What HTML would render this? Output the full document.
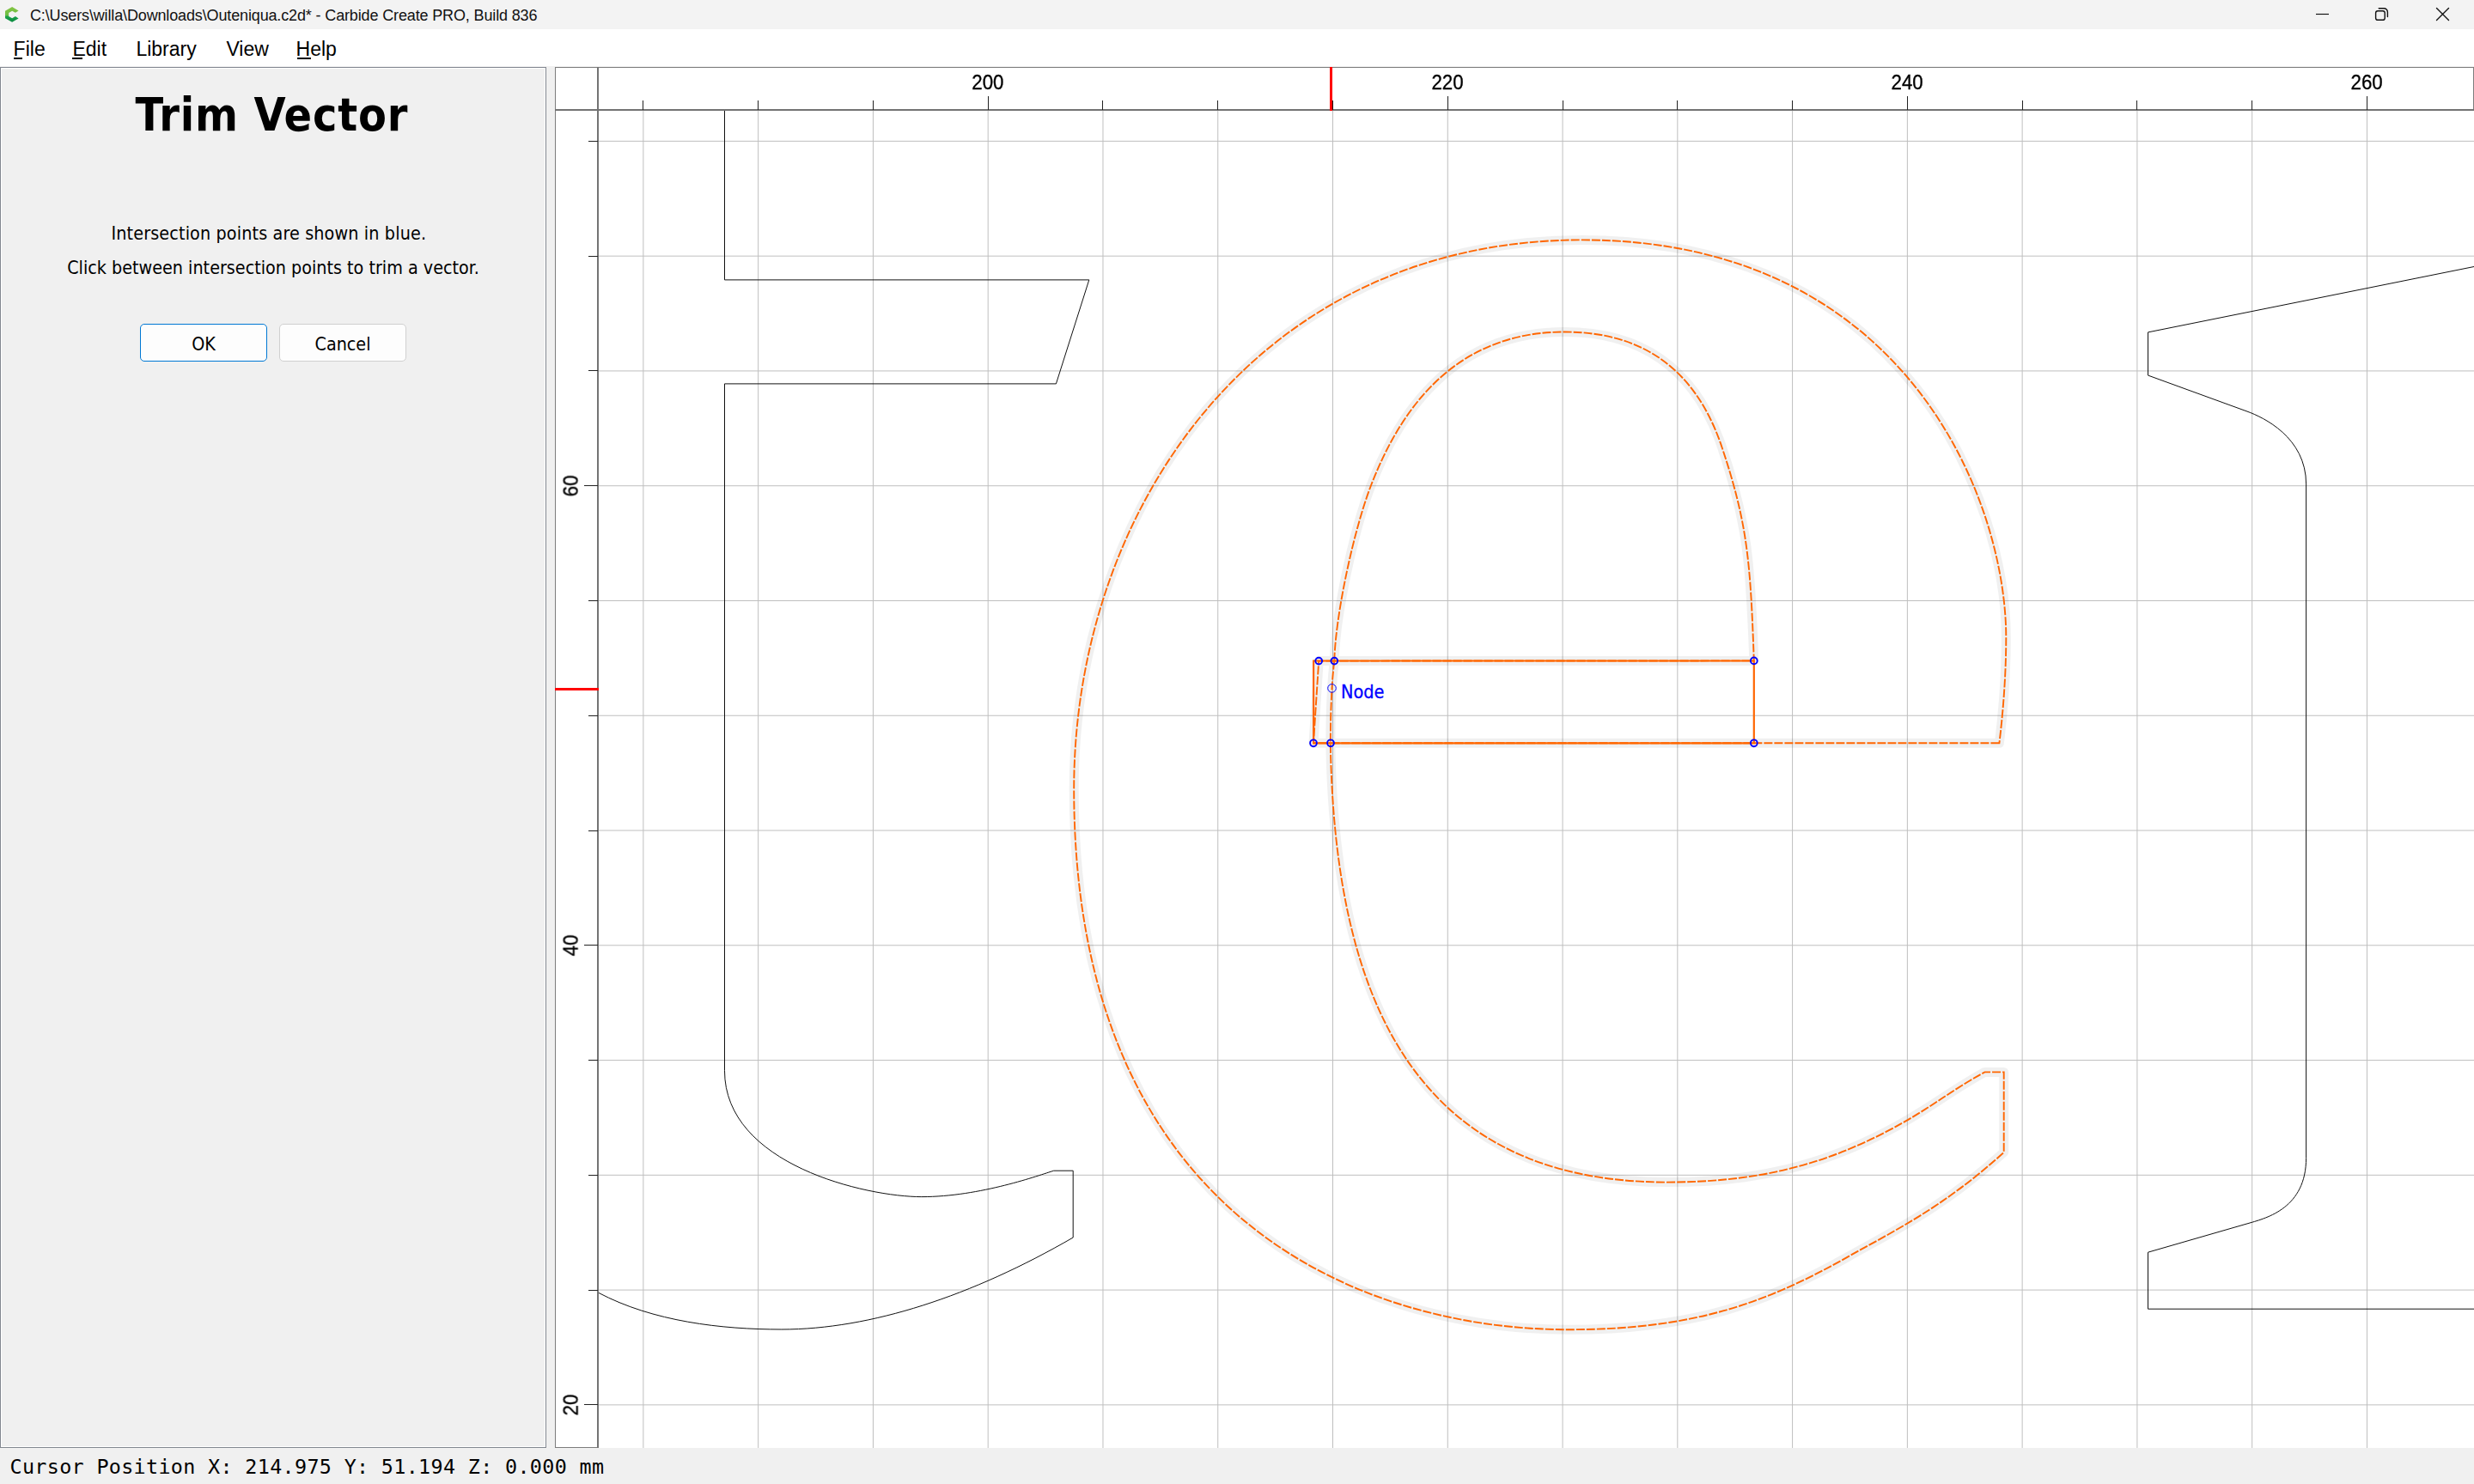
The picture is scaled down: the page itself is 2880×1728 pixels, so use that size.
<!DOCTYPE html>
<html lang="en"><head><meta charset="utf-8"><title>Carbide Create PRO - Trim Vector</title>
<style>
html,body{margin:0;padding:0}
body{width:2880px;height:1728px;overflow:hidden;background:#f0f0f0;position:relative;font-family:"Liberation Sans",sans-serif;color:#000}
.abs{position:absolute;white-space:nowrap}
#titlebar{left:0;top:0;width:2880px;height:34px;background:#f3f3f3}
#title{left:35px;top:8px;font-size:18px;line-height:21px;letter-spacing:-0.14px;color:#111}
#menubar{left:0;top:34px;width:2880px;height:43px;background:#fff}
.mi{top:43px;font-size:23px;line-height:28px}
.mi u{text-decoration:none}
.ul{top:67px;height:2px;background:#000}
#panel{left:0;top:78px;width:634px;height:1606px;background:#f0f0f0;border:1px solid #828790;box-shadow:inset 0 0 0 1px #fff}
.tah{font-family:"DejaVu Sans Condensed","DejaVu Sans","Liberation Sans",sans-serif;font-stretch:condensed}
#h1{left:-1.5px;width:636px;text-align:center;top:101.5px;font-size:53.33px;line-height:63px;font-weight:bold;letter-spacing:0.85px}
.p{left:0;width:636px;text-align:center;font-size:21.33px;line-height:25px}
.btn{top:377px;width:146px;height:42px;border:1px solid #d0d0d0;border-radius:5px;background:#fdfdfd;text-align:center;font-size:21.33px;line-height:45px}
#status{left:11.5px;top:1694px;font-family:"DejaVu Sans Mono","Liberation Mono",monospace;font-size:23.4px;line-height:28px;letter-spacing:0.33px}
</style></head><body>
<div class="abs" id="titlebar"></div>
<div class="abs" id="title">C:\Users\willa\Downloads\Outeniqua.c2d* - Carbide Create PRO, Build 836</div>
<div class="abs" id="menubar"></div>
<div class="abs mi" style="left:15.6px"><u>F</u>ile</div>
<div class="abs mi" style="left:84.4px"><u>E</u>dit</div>
<div class="abs mi" style="left:158.4px">Library</div>
<div class="abs mi" style="left:263.4px">View</div>
<div class="abs mi" style="left:344.6px"><u>H</u>elp</div>
<div class="abs ul" style="left:16px;width:10px"></div>
<div class="abs ul" style="left:84px;width:12px"></div>
<div class="abs ul" style="left:346px;width:16px"></div>
<div class="abs" id="panel"></div>
<div class="abs tah" id="h1">Trim Vector</div>
<div class="abs tah p" style="top:259px;letter-spacing:0.14px;left:-5.2px">Intersection points are shown in blue.</div>
<div class="abs tah p" style="top:299px">Click between intersection points to trim a vector.</div>
<div class="abs tah btn" style="left:163px;border-color:#0078d4">OK</div>
<div class="abs tah btn" style="left:325px">Cancel</div>
<svg width="2880" height="1728" viewBox="0 0 2880 1728" style="position:absolute;left:0;top:0"><defs><clipPath id="cv"><rect x="697" y="129" width="2183" height="1557"/></clipPath><linearGradient id="lg" x1="0" y1="0" x2="0" y2="1"><stop offset="0" stop-color="#84c441"/><stop offset="0.55" stop-color="#6cbd45"/><stop offset="0.62" stop-color="#1da24a"/><stop offset="1" stop-color="#07893f"/></linearGradient></defs><rect x="646" y="78" width="2234" height="1608" fill="#fff"/><path d="M748.89 129V1686M882.66 129V1686M1016.43 129V1686M1150.20 129V1686M1283.97 129V1686M1417.74 129V1686M1551.51 129V1686M1685.28 129V1686M1819.05 129V1686M1952.82 129V1686M2086.59 129V1686M2220.36 129V1686M2354.13 129V1686M2487.90 129V1686M2621.67 129V1686M2755.44 129V1686M697 1635.86H2880M697 1502.09H2880M697 1368.32H2880M697 1234.55H2880M697 1100.78H2880M697 967.01H2880M697 833.24H2880M697 699.47H2880M697 565.70H2880M697 431.93H2880M697 298.16H2880M697 164.39H2880" stroke="#bfbfbf" stroke-width="1" fill="none"/>
<g clip-path="url(#cv)" fill="none">
<path d="M2327.4 865.3L1548.8 865.3C1553.5 1162.5 1647.5 1376.6 1940.7 1376.6C2045.4 1376.6 2121.4 1356.5 2196.0 1317.7C2246.5 1291.5 2265.7 1273.0 2310.4 1248.4L2332.7 1248.4L2332.7 1341.8C2261.6 1406.3 2203.6 1433.9 2150.0 1464.1C2056.8 1516.6 1972.5 1548.2 1826.0 1548.2C1583.8 1548.2 1250.2 1417.5 1250.2 918.7C1250.2 594.9 1462.8 279.4 1841.9 279.4C2217.6 279.4 2335.3 580.7 2335.3 742.5C2335.3 790.0 2331.0 836.2 2327.4 865.3ZM1553.3 769.6C1554.7 714.9 1576.2 616.6 1595.9 565.5C1638.3 455.4 1709.0 386.5 1821.5 386.5C1914.1 386.5 1974.7 431.7 2004.6 521.0C2034.6 610.6 2037.7 655.3 2041.8 769.4ZM1553.3 769.6C1552.0 780.2 1551.1 790.8 1550.5 801.4C1549.9 812.1 1549.5 822.7 1549.2 833.4C1549.0 844.0 1548.9 854.7 1548.8 865.3M1553.3 769.6L1535.2 769.6L1529.0 865.3L1548.8 865.3" stroke="#000" stroke-opacity="0.06" stroke-width="11" stroke-linejoin="round"/>
<path d="M843.5 120L843.5 325.9L1267.8 325.9L1229.4 446.9L843.5 446.9L843.5 1246.7C843.5 1356.4 1008.9 1393.6 1072.8 1393.6C1141.4 1393.6 1210.9 1368.0 1226.7 1363.2L1249.2 1363.2L1249.2 1441.0C1131.6 1509.0 1013.5 1548.0 909.8 1548.0C839.8 1548.0 760.0 1538.8 696.5 1505.2L643.5 1477.2M2890 308.5L2500.5 386.9L2500.5 437.06L2616.0 479.1C2634.5 485.8 2684.6 509.1 2684.6 563.9L2684.6 1348.4C2684.6 1406.5 2639.1 1418.2 2618.0 1424.3L2500.5 1458.2L2500.5 1524.2L2890 1524.2" stroke="#111" stroke-width="1"/>
<path d="M2327.4 865.3L1548.8 865.3C1553.5 1162.5 1647.5 1376.6 1940.7 1376.6C2045.4 1376.6 2121.4 1356.5 2196.0 1317.7C2246.5 1291.5 2265.7 1273.0 2310.4 1248.4L2332.7 1248.4L2332.7 1341.8C2261.6 1406.3 2203.6 1433.9 2150.0 1464.1C2056.8 1516.6 1972.5 1548.2 1826.0 1548.2C1583.8 1548.2 1250.2 1417.5 1250.2 918.7C1250.2 594.9 1462.8 279.4 1841.9 279.4C2217.6 279.4 2335.3 580.7 2335.3 742.5C2335.3 790.0 2331.0 836.2 2327.4 865.3ZM1553.3 769.6C1554.7 714.9 1576.2 616.6 1595.9 565.5C1638.3 455.4 1709.0 386.5 1821.5 386.5C1914.1 386.5 1974.7 431.7 2004.6 521.0C2034.6 610.6 2037.7 655.3 2041.8 769.4ZM1553.3 769.6C1552.0 780.2 1551.1 790.8 1550.5 801.4C1549.9 812.1 1549.5 822.7 1549.2 833.4C1549.0 844.0 1548.9 854.7 1548.8 865.3M1553.3 769.6L1535.2 769.6L1529.0 865.3L1548.8 865.3" stroke="#ff6600" stroke-width="1.9" stroke-dasharray="10 2"/>
<path d="M1529.1 769.5H2041.8V865.3H1529.1Z" stroke="#ff6600" stroke-width="2.2"/>
<circle cx="1535.2" cy="769.6" r="3.9" stroke="#0000ff" stroke-width="1.9"/>
<circle cx="1553.3" cy="769.6" r="3.9" stroke="#0000ff" stroke-width="1.9"/>
<circle cx="1529.0" cy="865.3" r="3.9" stroke="#0000ff" stroke-width="1.9"/>
<circle cx="1549.0" cy="865.3" r="3.9" stroke="#0000ff" stroke-width="1.9"/>
<circle cx="2041.8" cy="769.4" r="3.9" stroke="#0000ff" stroke-width="1.9"/>
<circle cx="2041.8" cy="865.3" r="3.9" stroke="#0000ff" stroke-width="1.9"/>
<circle cx="1550.5" cy="801.4" r="4.8" stroke="#0000ff" stroke-width="1"/>
</g>
<text x="1561" y="812.6" font-family="'DejaVu Sans Condensed','DejaVu Sans','Liberation Sans',sans-serif" font-stretch="condensed" font-size="21.6" fill="#0000ff" stroke="#0000ff" stroke-width="0.3" opacity="0.999" textLength="50.5" lengthAdjust="spacingAndGlyphs">Node</text>
<rect x="646" y="78" width="2234" height="51" fill="#fff"/>
<rect x="646" y="78" width="51" height="1608" fill="#fff"/>
<path d="M646 78.5H2880M646.5 78V1686M2879.5 78V128M646 1685.5H696" stroke="#7d7d7d" stroke-width="1" fill="none" shape-rendering="crispEdges"/>
<path d="M646 128H2880M696 78V1686" stroke="#737373" stroke-width="2" fill="none" shape-rendering="crispEdges"/>
<path d="M748.5 117V128M882.5 117V128M1016.5 117V128M1150.5 112V128M1283.5 117V128M1417.5 117V128M1551.5 117V128M1685.5 112V128M1819.5 117V128M1952.5 117V128M2086.5 117V128M2220.5 112V128M2354.5 117V128M2487.5 117V128M2621.5 117V128M2755.5 112V128M680 1635.5H696M685 1502.5H696M685 1368.5H696M685 1234.5H696M680 1100.5H696M685 967.5H696M685 833.5H696M685 699.5H696M680 565.5H696M685 431.5H696M685 298.5H696M685 164.5H696" stroke="#222" stroke-width="1" fill="none" shape-rendering="crispEdges"/>
<g font-family="'Liberation Sans',sans-serif" font-size="24" fill="#000" stroke="#000" stroke-width="0.35" opacity="0.999"><text x="1131.3" y="104" textLength="37.2" lengthAdjust="spacingAndGlyphs">200</text><text x="1666.4" y="104" textLength="37.2" lengthAdjust="spacingAndGlyphs">220</text><text x="2201.5" y="104" textLength="37.2" lengthAdjust="spacingAndGlyphs">240</text><text x="2736.5" y="104" textLength="37.2" lengthAdjust="spacingAndGlyphs">260</text><text transform="translate(672.6 1635.9) rotate(-90)" x="-12.4" textLength="24.8" lengthAdjust="spacingAndGlyphs">20</text><text transform="translate(672.6 1100.8) rotate(-90)" x="-12.4" textLength="24.8" lengthAdjust="spacingAndGlyphs">40</text><text transform="translate(672.6 565.7) rotate(-90)" x="-12.4" textLength="24.8" lengthAdjust="spacingAndGlyphs">60</text></g>
<rect x="1548" y="78" width="3" height="51" fill="#ff0000"/>
<rect x="646" y="801" width="51" height="3" fill="#ff0000"/>
<path d="M1551.5 117V128" stroke="#111" stroke-width="1" shape-rendering="crispEdges"/><path d="M14.1 8.1L21.6 12.5L17.9 14.8L14.1 12.7L10.2 15V19.1L14.1 21.3L17.9 19.1L21.6 21.4L14.1 25.8L6 21.2V12.7Z" fill="url(#lg)"/><g fill="none" stroke="#111" stroke-width="1.4" stroke-linecap="round"><path d="M2696 16.5H2711" stroke-width="1.15" stroke-linecap="butt"/><rect x="2765.6" y="12.7" width="10.6" height="10.6" rx="2.4"/><path d="M2769.2 9.8H2775.2A4.2 4.2 0 0 1 2779.4 14V19.6"/><path d="M2836.5 9.6L2850.5 23.6M2850.5 9.6L2836.5 23.6"/></g></svg>
<div class="abs" id="status">Cursor Position X: 214.975 Y: 51.194 Z: 0.000 mm</div>
</body></html>
